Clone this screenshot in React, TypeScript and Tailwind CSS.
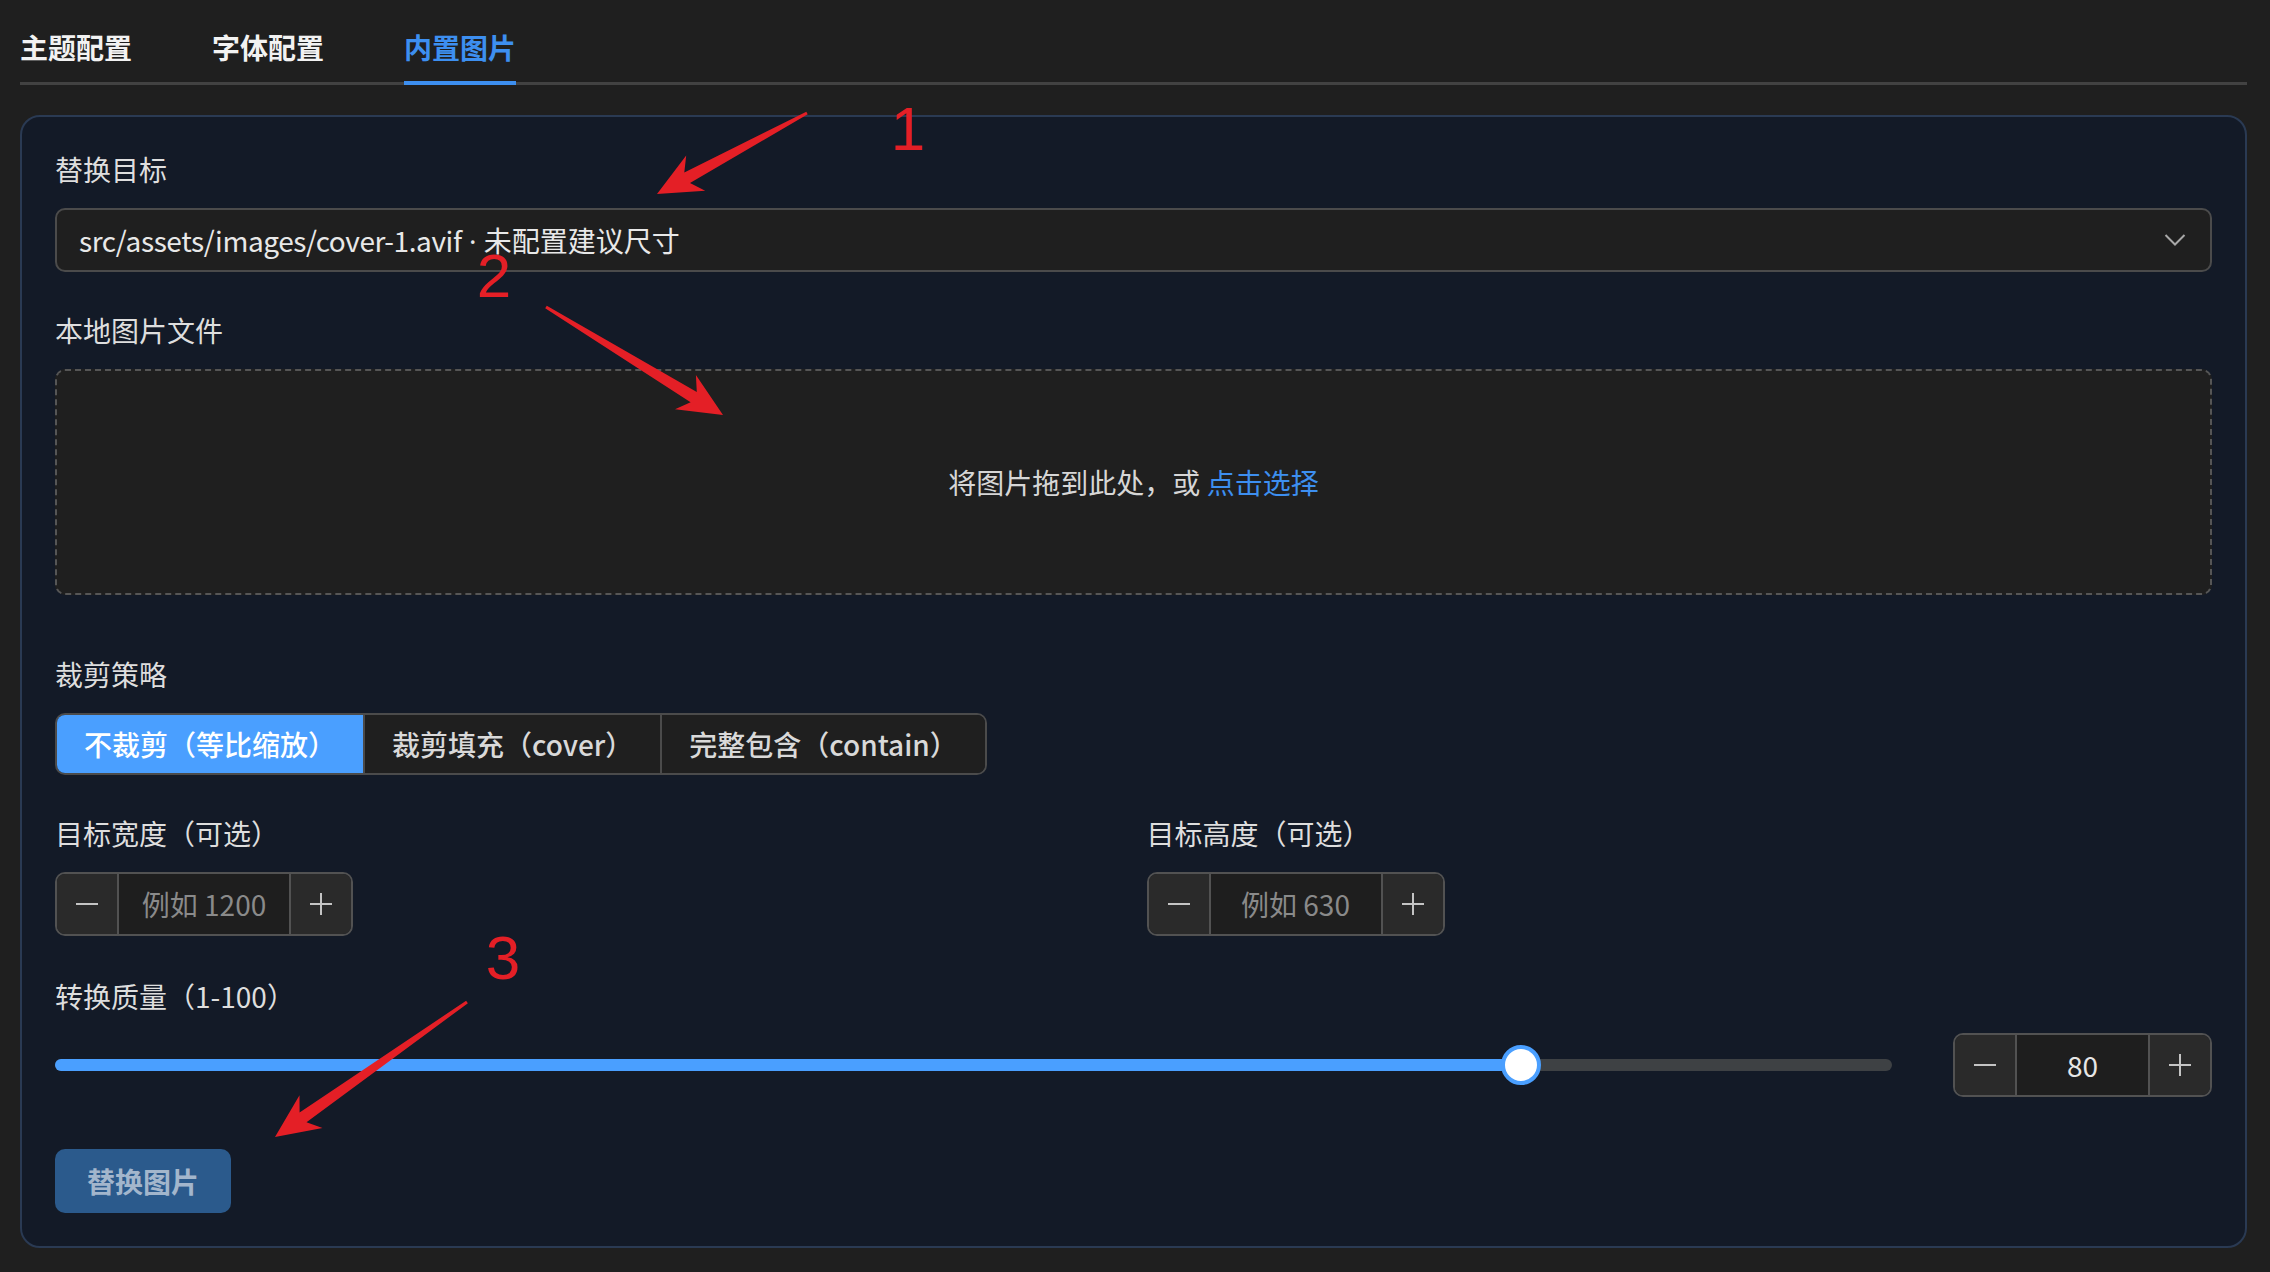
import React from "react";

function arrowPoints(
  x1: number,
  y1: number,
  x2: number,
  y2: number,
  headLen = 44,
  headHalf = 20,
  neckHalf = 6,
  tailHalf = 1.5
): string {
  const dx = x2 - x1;
  const dy = y2 - y1;
  const L = Math.hypot(dx, dy);
  const ux = dx / L;
  const uy = dy / L;
  const px = -uy;
  const py = ux;
  const wx = x2 - ux * headLen;
  const wy = y2 - uy * headLen;
  const nx = x2 - ux * headLen * 0.78;
  const ny = y2 - uy * headLen * 0.78;
  const pts: [number, number][] = [
    [x1 + px * tailHalf, y1 + py * tailHalf],
    [nx + px * neckHalf, ny + py * neckHalf],
    [wx + px * headHalf, wy + py * headHalf],
    [x2, y2],
    [wx - px * headHalf, wy - py * headHalf],
    [nx - px * neckHalf, ny - py * neckHalf],
    [x1 - px * tailHalf, y1 - py * tailHalf],
  ];
  return pts.map((p) => `${p[0].toFixed(1)},${p[1].toFixed(1)}`).join(" ");
}

function MinusIcon() {
  return (
    <svg width="24" height="24" viewBox="0 0 24 24">
      <line x1="1" y1="12" x2="23" y2="12" stroke="#c4c4c4" strokeWidth="2" />
    </svg>
  );
}

function PlusIcon() {
  return (
    <svg width="24" height="24" viewBox="0 0 24 24">
      <line x1="1" y1="12" x2="23" y2="12" stroke="#c4c4c4" strokeWidth="2" />
      <line x1="12" y1="1" x2="12" y2="23" stroke="#c4c4c4" strokeWidth="2" />
    </svg>
  );
}

function NumberBox({
  value,
  placeholder,
  widthClass,
}: {
  value?: string;
  placeholder?: string;
  widthClass: string;
}) {
  return (
    <div
      className={`${widthClass} h-[64px] flex border-2 border-[#525252] rounded-[10px] overflow-hidden`}
    >
      <div className="w-[62px] shrink-0 bg-[#2a2a2a] border-r-2 border-[#525252] flex items-center justify-center">
        <MinusIcon />
      </div>
      <div className="flex-1 bg-[#1e1e1e] flex items-center justify-center text-[28px]">
        {value ? (
          <span className="text-[#e6e6e6]">{value}</span>
        ) : (
          <span className="text-[#8a8a8a]">{placeholder}</span>
        )}
      </div>
      <div className="w-[62px] shrink-0 bg-[#2a2a2a] border-l-2 border-[#525252] flex items-center justify-center">
        <PlusIcon />
      </div>
    </div>
  );
}

function Label({ children }: { children: React.ReactNode }) {
  return (
    <div className="h-[40px] leading-[40px] text-[28px] text-[#dedede] mb-[19px]">
      {children}
    </div>
  );
}

export default function App() {
  return (
    <div className="relative w-[2270px] h-[1272px] overflow-hidden bg-[#1f1f1f] font-['Noto_Sans_CJK_SC','Noto_Sans',sans-serif] text-[#e3e3e3] pl-[20px] pr-[23px] pt-[12px]">
      {/* Tabs */}
      <div className="flex gap-[80px] h-[73px] border-b-[3px] border-[#424242]">
        <div className="h-full flex items-center text-[28px] font-semibold text-[#f2f2f2]">
          主题配置
        </div>
        <div className="h-full flex items-center text-[28px] font-semibold text-[#f2f2f2]">
          字体配置
        </div>
        <div className="relative h-full flex items-center text-[28px] font-semibold text-[#3d8ff0]">
          内置图片
          <div className="absolute left-0 right-0 bottom-[-3px] h-[4px] bg-[#3d8ff0]" />
        </div>
      </div>

      {/* Card */}
      <div className="mt-[30px] border-2 border-[#2a3a53] rounded-[20px] bg-[#131a27] px-[33px] pt-[32px] pb-[33px]">
        <Label>替换目标</Label>
        <div className="h-[64px] mb-[38px] rounded-[10px] border-2 border-[#4b4b4b] bg-[#1f1f1f] flex items-center justify-between pl-[22px] pr-[24px]">
          <span className="text-[28px] text-[#e8e8e8]">
            <span className="tracking-[-0.4px]">src/assets/images/cover-1.avif</span>
            <span className="font-['Noto_Sans',sans-serif]"> · </span>
            未配置建议尺寸
          </span>
          <svg width="22" height="14" viewBox="0 0 22 14">
            <polyline
              points="1.5,2 11,11.5 20.5,2"
              fill="none"
              stroke="#a8a8a8"
              strokeWidth="2"
            />
          </svg>
        </div>

        <Label>本地图片文件</Label>
        <div className="h-[226px] mb-[59px] rounded-[10px] border-2 border-dashed border-[#565656] bg-[#1f1f1f] flex items-center justify-center">
          <span className="text-[28px] text-[#d6d6d6]">
            将图片拖到此处，或 <span className="text-[#3d8ff0]">点击选择</span>
          </span>
        </div>

        <Label>裁剪策略</Label>
        <div className="flex w-fit h-[62px] mb-[38px] rounded-[10px] border-2 border-[#4b4b4b] overflow-hidden">
          <div className="px-[27px] flex items-center bg-[#4a9fff] text-white text-[28px] font-medium">
            不裁剪（等比缩放）
          </div>
          <div className="px-[27px] flex items-center bg-[#1f1f1f] border-l-2 border-[#4b4b4b] text-[#d9d9d9] text-[28px] font-medium">
            裁剪填充（cover）
          </div>
          <div className="px-[27px] flex items-center bg-[#1f1f1f] border-l-2 border-[#4b4b4b] text-[#d9d9d9] text-[28px] font-medium">
            完整包含（contain）
          </div>
        </div>

        <div className="grid grid-cols-2 gap-x-[26px] mb-[40px]">
          <div>
            <Label>目标宽度（可选）</Label>
            <NumberBox placeholder="例如 1200" widthClass="w-[298px]" />
          </div>
          <div>
            <Label>目标高度（可选）</Label>
            <NumberBox placeholder="例如 630" widthClass="w-[298px]" />
          </div>
        </div>

        <div className="h-[40px] leading-[40px] text-[28px] text-[#dedede] mb-[17px]">
          转换质量（1-100）
        </div>
        <div className="flex items-center gap-[61px] mb-[52px]">
          <div className="relative flex-1 h-[64px] flex items-center">
            <div className="relative w-full h-[12px] rounded-full bg-[#3e4144]">
              <div className="absolute left-0 top-0 h-full w-[79.8%] rounded-full bg-[#4a9fff]" />
              <div className="absolute left-[79.8%] top-1/2 w-[40px] h-[40px] -translate-x-1/2 -translate-y-1/2 rounded-full bg-white border-[4px] border-[#4a9fff]" />
            </div>
          </div>
          <NumberBox value="80" widthClass="w-[259px]" />
        </div>

        <div className="flex w-fit h-[64px] items-center px-[32px] rounded-[10px] bg-[#2b5a8c] text-[#a3b6cc] text-[28px] font-semibold">
          替换图片
        </div>
      </div>

      {/* Annotations */}
      <svg
        className="absolute left-0 top-0 pointer-events-none"
        width="2270"
        height="1272"
      >
        <polygon points={arrowPoints(807, 113, 657, 194)} fill="#e41f26" />
        <polygon points={arrowPoints(546, 307, 723, 415)} fill="#e41f26" />
        <polygon points={arrowPoints(467, 1002, 275, 1137)} fill="#e41f26" />
      </svg>
      <div className="absolute left-[878px] top-[98px] w-[60px] text-center text-[62px] leading-[62px] text-[#e41f26] font-['Liberation_Sans',sans-serif] pointer-events-none">
        1
      </div>
      <div className="absolute left-[464px] top-[245px] w-[60px] text-center text-[62px] leading-[62px] text-[#e41f26] font-['Liberation_Sans',sans-serif] pointer-events-none">
        2
      </div>
      <div className="absolute left-[473px] top-[927px] w-[60px] text-center text-[62px] leading-[62px] text-[#e41f26] font-['Liberation_Sans',sans-serif] pointer-events-none">
        3
      </div>
    </div>
  );
}
